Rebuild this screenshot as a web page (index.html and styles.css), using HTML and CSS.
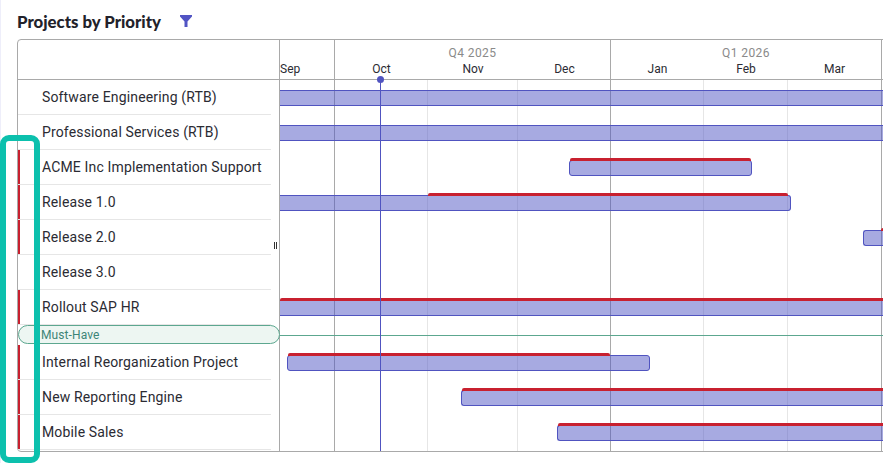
FILE: index.html
```html
<!DOCTYPE html>
<html lang="en">
<head>
	<meta charset="UTF-8">
	<title>Projects by Priority</title>
	<link rel="stylesheet" href="styles.css">
</head>
<body>
	<div class="page">
		<div class="head">
			<h1>Projects by Priority</h1>
			<svg class="filter" width="12" height="12" viewBox="0 0 12 12"><path d="M0 0H12V1.5L7.5 6.5V12H4.5V6.5L0 1.5Z"/></svg>
		</div>
		<div class="chart">
			<div class="side">
				<div class="side-top"></div>
				<div class="row"><i class="prio"></i><span>Software Engineering (RTB)</span></div>
				<div class="row"><i class="prio"></i><span>Professional Services (RTB)</span></div>
				<div class="row"><i class="prio red"></i><span>ACME Inc Implementation Support</span></div>
				<div class="row"><i class="prio red"></i><span>Release 1.0</span></div>
				<div class="row"><i class="prio red"></i><span>Release 2.0</span></div>
				<div class="row"><i class="prio"></i><span>Release 3.0</span></div>
				<div class="row"><i class="prio red"></i><span>Rollout SAP HR</span></div>
				<div class="group"><div class="pill">Must-Have</div></div>
				<div class="row"><i class="prio red"></i><span>Internal Reorganization Project</span></div>
				<div class="row"><i class="prio red"></i><span>New Reporting Engine</span></div>
				<div class="row"><i class="prio red"></i><span>Mobile Sales</span></div>
				<div class="handle"></div>
			</div>
			<div class="time">
				<div class="time-top">
					<div class="quarter" style="width:55px">
						<div class="q-name"></div>
						<div class="months"><div class="month first">Sep</div></div>
					</div>
					<div class="quarter" style="width:276px">
						<div class="q-name">Q4 2025</div>
						<div class="months">
							<div class="month" style="width:93px">Oct</div>
							<div class="month" style="width:90px">Nov</div>
							<div class="month" style="width:93px">Dec</div>
						</div>
					</div>
					<div class="quarter" style="width:271px">
						<div class="q-name">Q1 2026</div>
						<div class="months">
							<div class="month" style="width:93px">Jan</div>
							<div class="month" style="width:84px">Feb</div>
							<div class="month" style="width:93px">Mar</div>
						</div>
					</div>
				</div>
				<div class="body">
					<div class="grid">
						<div class="col end" style="width:55px"></div>
						<div class="col" style="width:93px"></div>
						<div class="col" style="width:90px"></div>
						<div class="col end" style="width:93px"></div>
						<div class="col" style="width:93px"></div>
						<div class="col" style="width:84px"></div>
						<div class="col end" style="width:94px"></div>
					</div>
					<div class="line">
						<div class="bar open" style="left:0;width:640px"></div>
					</div>
					<div class="line">
						<div class="bar open" style="left:0;width:640px"></div>
					</div>
					<div class="line">
						<div class="bar" style="left:289px;width:183px"><i class="risk" style="left:0;right:0"></i></div>
					</div>
					<div class="line">
						<div class="bar open-left" style="left:0;width:511px"><i class="risk" style="left:148px;right:2px"></i></div>
					</div>
					<div class="line">
						<div class="bar open-right" style="left:583px;width:60px"><i class="risk" style="left:17px;right:0"></i></div>
					</div>
					<div class="line"></div>
					<div class="line">
						<div class="bar open" style="left:0;width:640px"><i class="risk" style="left:0;right:0"></i></div>
					</div>
					<div class="band"></div>
					<div class="line">
						<div class="bar" style="left:7px;width:363px"><i class="risk" style="left:0;width:322px"></i></div>
					</div>
					<div class="line">
						<div class="bar open-right" style="left:181px;width:460px"><i class="risk" style="left:0;right:0"></i></div>
					</div>
					<div class="line">
						<div class="bar open-right" style="left:277px;width:360px"><i class="risk" style="left:0;right:0"></i></div>
					</div>
					<div class="today"></div>
				</div>
			</div>
		</div>
		<div class="callout"></div>
	</div>
</body>
</html>
```

FILE: styles.css
```css
*{
	margin: 0;
	padding: 0;
	box-sizing: border-box;
}
html, body{
	width: 883px;
	height: 463px;
	overflow: hidden;
	background: #fff;
}
.page{
	position: relative;
	height: 463px;
	padding-left: 16px;
	border-left: 1px solid #eeeefa;
	font-family: Roboto, sans-serif;
	color: #2b2b33;
}
.head{
	height: 39px;
	display: flex;
	align-items: center;
	gap: 19px;
	padding-top: 3px;
}
.head h1{
	font-family: Lato, sans-serif;
	font-size: 16.8px;
	font-weight: 900;
	color: #22222a;
}
.filter{
	fill: #5154c4;
}
.chart{
	display: flex;
	width: 900px;
	height: 413px;
	border: 1px solid #a9a9a9;
	border-radius: 4px 0 0 4px;
}
.side{
	position: relative;
	width: 262px;
	flex: none;
	border-right: 1px solid #a9a9a9;
}
.side-top{
	height: 40px;
	border-bottom: 1px solid #a9a9a9;
	margin-right: -1px;
}
.row{
	height: 35px;
	width: 253px;
	display: flex;
	border-bottom: 1px solid #e6e6e6;
	font-size: 14px;
	letter-spacing: 0.15px;
}
.row span{
	margin-left: 22px;
	line-height: 35px;
}
.prio{
	width: 2px;
	flex: none;
}
.prio.red{
	background: #c8202f;
}
.group{
	height: 20px;
}
.pill{
	height: 19px;
	width: 262px;
	border: 1px solid #5ca78f;
	border-radius: 10px;
	background: #edf6f2;
	color: #3d8577;
	font-size: 12px;
	line-height: 19px;
	letter-spacing: 0.1px;
	padding-left: 22px;
}
.handle{
	position: absolute;
	left: 256px;
	top: 202px;
	width: 3px;
	height: 7px;
	border-left: 1px solid #333;
	border-right: 1px solid #333;
}
.time{
	flex: 1;
	min-width: 0;
}
.time-top{
	display: flex;
	height: 40px;
	border-bottom: 1px solid #a9a9a9;
}
.quarter{
	flex: none;
	height: 39px;
	border-right: 1px solid #a9a9a9;
}
.q-name{
	height: 20px;
	padding-top: 6px;
	font-size: 12px;
	line-height: 15px;
	letter-spacing: 0.4px;
	text-align: center;
	color: #8a8a8a;
}
.months{
	display: flex;
}
.month{
	flex: none;
	font-size: 12px;
	line-height: 18px;
	text-align: center;
}
.month.first{
	text-align: left;
}
.body{
	position: relative;
	height: 371px;
}
.grid{
	position: absolute;
	top: 0;
	left: 0;
	bottom: 0;
	display: flex;
}
.col{
	flex: none;
	border-right: 1px solid #e6e6e6;
}
.col.end{
	border-right-color: #a9a9a9;
}
.line{
	position: relative;
	height: 35px;
}
.band{
	position: relative;
	height: 20px;
	background: linear-gradient(#5ca78f, #5ca78f) 0 10px / 100% 1px no-repeat;
}
.bar{
	position: absolute;
	top: 10px;
	height: 16px;
	background: rgba(80,85,195,0.5);
	border: 1px solid #5054c0;
	border-radius: 3px;
}
.bar.open{
	border-radius: 0;
	border-left: none;
	border-right: none;
}
.bar.open-left{
	border-radius: 0 3px 3px 0;
	border-left: none;
}
.bar.open-right{
	border-radius: 3px 0 0 3px;
	border-right: none;
}
.risk{
	position: absolute;
	top: -3px;
	height: 3px;
	background: #c8202f;
	border-radius: 2px 2px 0 0;
}
.today{
	position: absolute;
	top: 0;
	bottom: 0;
	left: 100px;
	width: 1px;
	background: #5054c0;
}
.today::before{
	content: "";
	position: absolute;
	left: -3px;
	top: -4px;
	width: 7px;
	height: 7px;
	border-radius: 50%;
	background: #5054c0;
}
.callout{
	position: absolute;
	left: -1px;
	top: 135px;
	width: 40px;
	height: 328px;
	border: 6px solid #0cc0ad;
	border-radius: 9px;
}
```
